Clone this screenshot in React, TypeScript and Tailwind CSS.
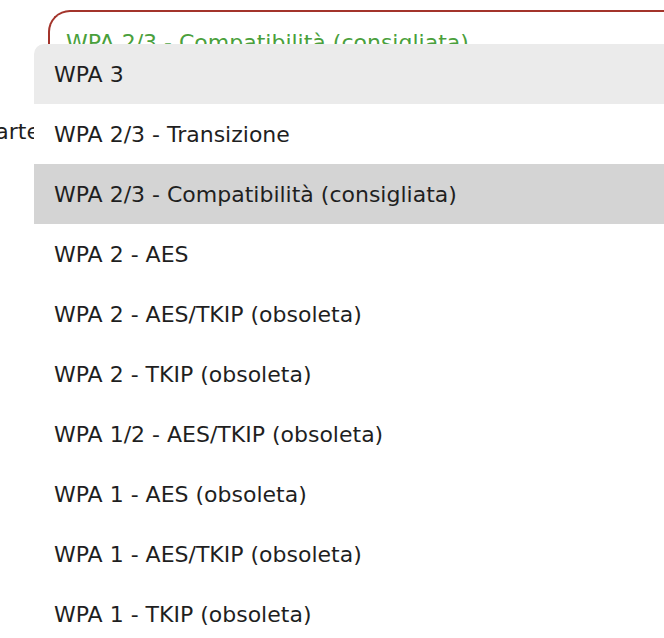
import React from 'react';

const options = [
  'WPA 3',
  'WPA 2/3 - Transizione',
  'WPA 2/3 - Compatibilità (consigliata)',
  'WPA 2 - AES',
  'WPA 2 - AES/TKIP (obsoleta)',
  'WPA 2 - TKIP (obsoleta)',
  'WPA 1/2 - AES/TKIP (obsoleta)',
  'WPA 1 - AES (obsoleta)',
  'WPA 1 - AES/TKIP (obsoleta)',
  'WPA 1 - TKIP (obsoleta)',
];

const App: React.FC = () => {
  const selected = 2;
  const hovered = 0;

  return (
    <div
      className="relative w-[664px] h-[638px] overflow-hidden bg-white text-[#1f1f1f]"
      style={{ fontFamily: '"DejaVu Sans", Verdana, sans-serif' }}
    >
      {/* form behind the open list */}
      <div className="flex flex-col pt-[10px]">
        <div className="ml-[48px] h-[60px] rounded-tl-[22px] border-t-2 border-l-2 border-[#a3342b] pl-[16px] pt-[17px] text-[22px] leading-[28px] text-[#4aa03c] whitespace-nowrap">
          WPA 2/3 - Compatibilità (consigliata)
        </div>
        <div className="mt-[48px] w-[40px] overflow-hidden whitespace-nowrap flex justify-end text-[22px] leading-[28px]">
          da parte
        </div>
      </div>

      {/* open select menu */}
      <ul className="absolute left-[34px] top-[44px] right-0 bottom-0 bg-white rounded-tl-[10px] overflow-hidden">
        {options.map((opt, i) => (
          <li
            key={opt}
            className={`h-[60px] flex items-center pl-[20px] text-[22px] whitespace-nowrap ${
              i === selected ? 'bg-[#d4d4d4]' : i === hovered ? 'bg-[#ebebeb]' : 'bg-white'
            }`}
          >
            {opt}
          </li>
        ))}
      </ul>
    </div>
  );
};

export default App;
